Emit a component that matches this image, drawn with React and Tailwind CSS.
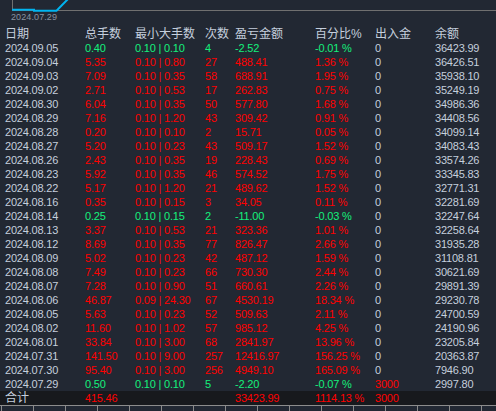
import React from "react";

const rows = [
  ["2024.09.05", "0.40", "0.10", "0.10", "4", "-2.52", "-0.01 %", "0", "36423.99", "g"],
  ["2024.09.04", "5.35", "0.10", "0.80", "27", "488.41", "1.36 %", "0", "36426.51", "r"],
  ["2024.09.03", "7.09", "0.10", "0.35", "58", "688.91", "1.95 %", "0", "35938.10", "r"],
  ["2024.09.02", "2.71", "0.10", "0.53", "17", "262.83", "0.75 %", "0", "35249.19", "r"],
  ["2024.08.30", "6.04", "0.10", "0.35", "50", "577.80", "1.68 %", "0", "34986.36", "r"],
  ["2024.08.29", "7.16", "0.10", "1.20", "43", "309.42", "0.91 %", "0", "34408.56", "r"],
  ["2024.08.28", "0.20", "0.10", "0.10", "2", "15.71", "0.05 %", "0", "34099.14", "r"],
  ["2024.08.27", "5.20", "0.10", "0.23", "43", "509.17", "1.52 %", "0", "34083.43", "r"],
  ["2024.08.26", "2.43", "0.10", "0.35", "19", "228.43", "0.69 %", "0", "33574.26", "r"],
  ["2024.08.23", "5.92", "0.10", "0.35", "46", "574.52", "1.75 %", "0", "33345.83", "r"],
  ["2024.08.22", "5.17", "0.10", "1.20", "21", "489.62", "1.52 %", "0", "32771.31", "r"],
  ["2024.08.16", "0.35", "0.10", "0.15", "3", "34.05", "0.11 %", "0", "32281.69", "r"],
  ["2024.08.14", "0.25", "0.10", "0.15", "2", "-11.00", "-0.03 %", "0", "32247.64", "g"],
  ["2024.08.13", "3.37", "0.10", "0.53", "21", "323.36", "1.01 %", "0", "32258.64", "r"],
  ["2024.08.12", "8.69", "0.10", "0.35", "77", "826.47", "2.66 %", "0", "31935.28", "r"],
  ["2024.08.09", "5.02", "0.10", "0.23", "42", "487.12", "1.59 %", "0", "31108.81", "r"],
  ["2024.08.08", "7.49", "0.10", "0.23", "66", "730.30", "2.44 %", "0", "30621.69", "r"],
  ["2024.08.07", "7.28", "0.10", "0.90", "51", "660.61", "2.26 %", "0", "29891.39", "r"],
  ["2024.08.06", "46.87", "0.09", "24.30", "67", "4530.19", "18.34 %", "0", "29230.78", "r"],
  ["2024.08.05", "5.63", "0.10", "0.23", "52", "509.63", "2.11 %", "0", "24700.59", "r"],
  ["2024.08.02", "11.60", "0.10", "1.02", "57", "985.12", "4.25 %", "0", "24190.96", "r"],
  ["2024.08.01", "33.84", "0.10", "3.00", "68", "2841.97", "13.96 %", "0", "23205.84", "r"],
  ["2024.07.31", "141.50", "0.10", "9.00", "257", "12416.97", "156.25 %", "0", "20363.87", "r"],
  ["2024.07.30", "95.40", "0.10", "3.00", "256", "4949.10", "165.09 %", "0", "7946.90", "r"],
  ["2024.07.29", "0.50", "0.10", "0.10", "5", "-2.20", "-0.07 %", "3000", "2997.80", "g"],
];

const grid = "grid grid-cols-[80px_50px_70px_30px_80px_60px_60px_1fr] pl-[5px] h-[14px] items-center whitespace-nowrap";
const num = "text-[11px] leading-[14px] tracking-[-0.2px]";
const light = "text-[#c5cfdd]";

function Row({ r }) {
  const c = r[9] === "g" ? "text-[#14f07c]" : "text-[#ff0000]";
  const inout = r[7] === "0" ? light : "text-[#ff0000]";
  return (
    <div className={`${grid} ${num}`}>
      <span className={light}>{r[0]}</span>
      <span className={c}>{r[1]}</span>
      <span className={c}>
        {r[2]} | {r[3]}
      </span>
      <span className={c}>{r[4]}</span>
      <span className={c}>{r[5]}</span>
      <span className={c}>{r[6]}</span>
      <span className={inout}>{r[7]}</span>
      <span className={light}>{r[8]}</span>
    </div>
  );
}

export default function App() {
  const cjk = "[font-family:'Liberation_Sans','Noto_Sans_CJK_SC',sans-serif]";
  const ticks = Array.from({ length: 16 }, (_, i) => i);
  return (
    <div className={`w-[496px] h-[411px] overflow-hidden bg-[#222833] ${cjk}`}>
      <div className="h-[26.5px]">
        <svg width="496" height="12" className="block">
          <line x1="12.5" y1="0" x2="12.5" y2="10.5" stroke="#707070" strokeWidth="1" />
          <line x1="12" y1="10.5" x2="496" y2="10.5" stroke="#707070" strokeWidth="1" />
          <polyline
            points="12,9.8 34,9.8 34,10.8 56.5,10.8 68,-1"
            fill="none"
            stroke="#00b4f0"
            strokeWidth="2"
          />
        </svg>
        <div className="pl-[11px] text-[9px] leading-[10px] text-[#8893a1] tracking-[0.1px]">2024.07.29</div>
      </div>
      <div className={`${grid} text-[12px] leading-[14px] ${light}`}>
        <span>日期</span>
        <span>总手数</span>
        <span>最小大手数</span>
        <span>次数</span>
        <span>盈亏金额</span>
        <span>百分比%</span>
        <span>出入金</span>
        <span>余额</span>
      </div>
      {rows.map((r) => (
        <Row key={r[0]} r={r} />
      ))}
      <div className={`${grid} bg-[#17191d] text-[11px] leading-[14px] tracking-[-0.2px]`}>
        <span className={`${light} text-[12px] tracking-normal`}>合计</span>
        <span className="text-[#ff0000]">415.46</span>
        <span></span>
        <span></span>
        <span className="text-[#ff0000]">33423.99</span>
        <span className="text-[#ff0000]">1114.13 %</span>
        <span className="text-[#ff0000]">3000</span>
        <span></span>
      </div>
      <div className="h-[1.5px] bg-[#8c8c8c]"></div>
      <div className="flex h-[5px] pl-px">
        {ticks.map((i) => (
          <div key={i} className="w-[32px] shrink-0">
            <div className="w-px h-[5px] bg-[#8c8c8c]"></div>
          </div>
        ))}
      </div>
    </div>
  );
}
